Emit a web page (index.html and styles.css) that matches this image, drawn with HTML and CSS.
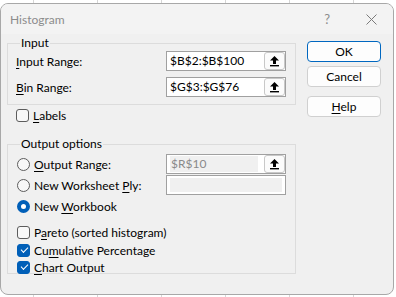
FILE: index.html
```html
<!DOCTYPE html>
<html lang="en">

<head>
    <meta charset="UTF-8">
    <title>Histogram</title>
    <link rel="stylesheet" href="styles.css">
</head>

<body>
    <div class="dialog">
        <div class="titlebar">
            <span class="title">Histogram</span>
            <span class="help-q">?</span>
            <svg class="close" width="11" height="11" viewBox="0 0 11 11">
                <path d="M0.5 0.5 L10.5 10.5 M10.5 0.5 L0.5 10.5" stroke="#7a7a7a" stroke-width="1" fill="none" />
            </svg>
        </div>

        <div class="content">
            <div class="left">
                <fieldset class="group input-group">
                    <legend>Input</legend>
                    <div class="row">
                        <label class="lbl"><u>I</u>nput Range:</label>
                        <div class="refbox">
                            <span class="reftext">$B$2:$B$100</span>
                            <span class="pick"><svg width="11" height="12" viewBox="0 0 11 12"><path d="M5.5 1 L10 5.5 L7 5.5 L7 9 L4 9 L4 5.5 L1 5.5 Z" fill="#000" /><rect x="1" y="10" width="9" height="1.4" fill="#000" /></svg></span>
                        </div>
                    </div>
                    <div class="row">
                        <label class="lbl"><u>B</u>in Range:</label>
                        <div class="refbox">
                            <span class="reftext">$G$3:$G$76</span>
                            <span class="pick"><svg width="11" height="12" viewBox="0 0 11 12"><path d="M5.5 1 L10 5.5 L7 5.5 L7 9 L4 9 L4 5.5 L1 5.5 Z" fill="#000" /><rect x="1" y="10" width="9" height="1.4" fill="#000" /></svg></span>
                        </div>
                    </div>
                </fieldset>

                <div class="check labels-row">
                    <span class="box"></span>
                    <span><u>L</u>abels</span>
                </div>

                <fieldset class="group output-group">
                    <legend>Output options</legend>
                    <div class="row">
                        <div class="check"><span class="radio"></span><span><u>O</u>utput Range:</span></div>
                        <div class="refbox disabled">
                            <span class="reftext">$R$10</span>
                            <span class="pick"><svg width="11" height="12" viewBox="0 0 11 12"><path d="M5.5 1 L10 5.5 L7 5.5 L7 9 L4 9 L4 5.5 L1 5.5 Z" fill="#000" /><rect x="1" y="10" width="9" height="1.4" fill="#000" /></svg></span>
                        </div>
                    </div>
                    <div class="row">
                        <div class="check"><span class="radio"></span><span>New Worksheet <u>P</u>ly:</span></div>
                        <div class="refbox disabled empty"></div>
                    </div>
                    <div class="row">
                        <div class="check"><span class="radio on"></span><span>New <u>W</u>orkbook</span></div>
                    </div>

                    <div class="checks">
                        <div class="check"><span class="box"></span><span>P<u>a</u>reto (sorted histogram)</span></div>
                        <div class="check"><span class="box on"></span><span>Cu<u>m</u>ulative Percentage</span></div>
                        <div class="check"><span class="box on"></span><span><u>C</u>hart Output</span></div>
                    </div>
                </fieldset>
            </div>

            <div class="buttons">
                <button class="btn default">OK</button>
                <button class="btn">Cancel</button>
                <button class="btn help"><u>H</u>elp</button>
            </div>
        </div>
    </div>
</body>

</html>
```

FILE: styles.css
```css
* {
    margin: 0;
    padding: 0;
    box-sizing: border-box;
}

body {
    width: 396px;
    height: 297px;
    overflow: hidden;
    background: #fff linear-gradient(90deg, #d6d6d6 1px, transparent 1px) 33px 0 / 64px 100%;
    font-family: Lato, "Noto Sans", sans-serif;
    font-size: 12px;
    color: #000;
    padding-top: 3px;
}

.dialog {
    width: 394px;
    height: 292px;
    background: #f0f0f0;
    border: 1px solid #a8a8a8;
    border-radius: 8px;
    overflow: hidden;
}

.titlebar {
    height: 30px;
    background: #f3f3f3;
    display: flex;
    align-items: center;
    padding-left: 9px;
}

.title {
    color: #8c8c8c;
    flex: 1;
}

.help-q {
    color: #8c8c8c;
    font-size: 13px;
    margin-right: 36px;
}

.close {
    margin-right: 16px;
}

.content {
    display: flex;
    padding: 0 0 0 6px;
}

.left {
    width: 289px;
}

.group {
    border: 1px solid #dcdcdc;
    padding: 0 9px 0 8px;
}

.group legend {
    margin-left: 4px;
    padding: 0 1px;
    line-height: 16px;
}

.input-group {
    margin-top: 1px;
    height: 70px;
    padding-top: 0;
}

.row {
    display: flex;
    align-items: center;
    justify-content: space-between;
    height: 20px;
    margin-bottom: 6px;
}

.lbl u,
.check u,
.btn u {
    text-decoration-thickness: 1px;
    text-underline-offset: 2px;
}

.refbox {
    width: 120px;
    height: 20px;
    background: #fff;
    border: 1px solid #a0a0a0;
    display: flex;
    align-items: center;
    padding-left: 3px;
}

.reftext {
    flex: 1;
    line-height: 16px;
}

.pick {
    width: 21px;
    height: 18px;
    border: 1px solid #c8c8c8;
    border-radius: 3px;
    background: #fbfbfb;
    display: flex;
    align-items: center;
    justify-content: center;
}

.refbox.disabled {
    padding: 2px 0 2px 3px;
}

.refbox.disabled .reftext {
    background: #f0f0f0;
    color: #8a8a8a;
    padding-left: 1px;
    margin-right: 6px;
}

.refbox.empty {
    padding: 2px 3px;
}

.refbox.empty::before {
    content: "";
    flex: 1;
    height: 14px;
    background: #f0f0f0;
}

.check {
    display: flex;
    align-items: center;
    gap: 4px;
    height: 17px;
}

.labels-row {
    margin: 2px 0 0 9px;
}

.box {
    width: 13px;
    height: 13px;
    border: 1px solid #5c5c5c;
    border-radius: 3px;
    background: #f8f8f8;
}

.box.on {
    background: #005fb8;
    border-color: #005fb8;
    position: relative;
}

.box.on::after {
    content: "";
    position: absolute;
    left: 3px;
    top: 2px;
    width: 6px;
    height: 3px;
    border-left: 1px solid #fff;
    border-bottom: 1px solid #fff;
    transform: rotate(-45deg);
}

.radio {
    width: 13px;
    height: 13px;
    border: 1px solid #5c5c5c;
    border-radius: 50%;
    background: #f8f8f8;
}

.radio.on {
    background: #fff;
    border: 4px solid #005fb8;
}

.output-group {
    margin-top: 12px;
    height: 138px;
    padding-top: 2px;
}

.output-group .row {
    margin-bottom: 1px;
}

.output-group .check {
    margin-left: 1px;
}

.checks {
    margin-top: 8px;
}

.checks .check {
    height: 17.5px;
}

.buttons {
    display: flex;
    flex-direction: column;
    margin: 7px 0 0 11px;
}

.btn {
    width: 74px;
    height: 21px;
    font-family: inherit;
    font-size: 12px;
    background: #fdfdfd;
    border: 1px solid #d0d0d0;
    border-radius: 4px;
    margin-bottom: 4px;
    color: #000;
}

.btn.default {
    border: 1px solid #0067c0;
    box-shadow: inset 0 0 0 1px #fdfdfd;
}

.btn.help {
    margin-top: 5px;
}
```
